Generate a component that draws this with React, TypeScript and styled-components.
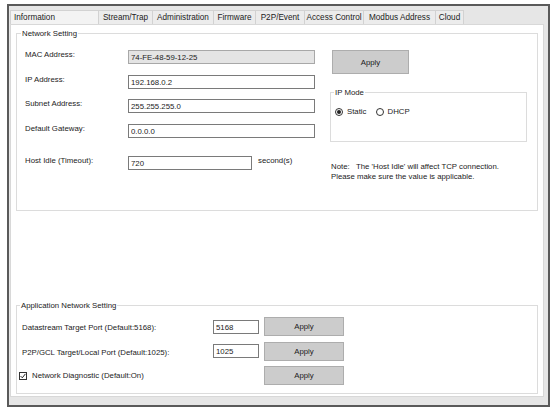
import { Fragment } from 'react';
import styled, { createGlobalStyle } from 'styled-components';

const GlobalStyle = createGlobalStyle`
  body {
    margin: 0;
    background: #ffffff;
    font-family: 'Liberation Sans', Arial, sans-serif;
    font-size: 7.8px;
    color: #1b1b1b;
  }
`;

const Window = styled.div`
  box-sizing: border-box;
  width: 543px;
  height: 403px;
  margin: 4px 0 0 7px;
  border: 2px solid #5a5a5a;
  background: #e6e6e6;
  display: flex;
  flex-direction: column;
  padding: 4px 4px 8px 1px;
`;

const TabStrip = styled.div`
  display: flex;
  height: 14px;
  padding-left: 1px;
`;

const Tab = styled.div<{ $w: number; $active?: boolean }>`
  box-sizing: border-box;
  width: ${(p) => p.$w}px;
  height: 14px;
  margin-left: -1px;
  border: 1px solid #d2d2d2;
  border-bottom: none;
  background: ${(p) => (p.$active ? '#f3f3f3' : '#ececec')};
  font-size: 8.2px;
  line-height: 13px;
  text-align: ${(p) => (p.$active ? 'left' : 'center')};
  padding-left: ${(p) => (p.$active ? '3px' : '0')};
  white-space: nowrap;
`;

const Panel = styled.div`
  flex: 1;
  background: #ffffff;
  border: 1px solid #d8d8d8;
  display: flex;
  flex-direction: column;
  justify-content: space-between;
  padding: 4px 5px 2px 5px;
`;

const Group = styled.fieldset<{ $h?: number; $w?: number }>`
  box-sizing: border-box;
  margin: 0;
  padding: 0;
  border: 1px solid #dcdcdc;
  min-width: 0;
  ${(p) => (p.$h ? `height: ${p.$h}px;` : '')}
  ${(p) => (p.$w ? `width: ${p.$w}px;` : '')}
`;

const Legend = styled.legend<{ $x: number }>`
  font-size: 7.8px;
  line-height: 9px;
  padding: 0 1px;
  margin-left: ${(p) => p.$x}px;
`;

const NetworkBody = styled.div`
  display: flex;
  padding: 12px 0 0 8px;
`;

const LeftCol = styled.div`
  width: 305px;
  display: flex;
  flex-direction: column;
  gap: 10.67px;
`;

const Row = styled.div<{ $top?: number }>`
  display: flex;
  align-items: flex-start;
  height: 14px;
  margin-top: ${(p) => p.$top ?? 0}px;
`;

const Label = styled.span`
  width: 103px;
  line-height: 9px;
  white-space: nowrap;
`;

const TextBox = styled.input<{ $w: number; $disabled?: boolean }>`
  box-sizing: border-box;
  width: ${(p) => p.$w}px;
  height: 14px;
  margin: 0;
  padding: 1px 2px 0;
  border: 1px solid ${(p) => (p.$disabled ? '#a8a8a8' : '#7a7a7a')};
  background: ${(p) => (p.$disabled ? '#e4e4e4' : '#ffffff')};
  font-family: 'Liberation Sans', Arial, sans-serif;
  font-size: 7.8px;
  color: #1b1b1b;
  outline: none;
`;

const Unit = styled.span`
  margin-left: 6px;
  line-height: 9px;
`;

const RightCol = styled.div`
  display: flex;
  flex-direction: column;
  align-items: flex-start;
`;

const Button = styled.button<{ $w: number; $h: number }>`
  box-sizing: border-box;
  width: ${(p) => p.$w}px;
  height: ${(p) => p.$h}px;
  margin: 0;
  padding: 0;
  border: 1px solid #adadad;
  background: #cccccc;
  font-family: 'Liberation Sans', Arial, sans-serif;
  font-size: 7.8px;
  color: #1b1b1b;
`;

const ApplyTop = styled(Button)`
  margin-left: 2px;
`;

const ModeGroup = styled(Group)`
  margin-top: 14px;
`;

const RadioRow = styled.div`
  display: flex;
  align-items: center;
  padding: 10px 0 0 4px;
  line-height: 9px;
`;

const RadioOption = styled.label`
  display: flex;
  align-items: center;
  gap: 4px;
  margin-right: 9px;
`;

const RadioDot = styled.span<{ $on?: boolean }>`
  box-sizing: border-box;
  width: 8px;
  height: 8px;
  border: 1px solid #333333;
  border-radius: 50%;
  display: flex;
  align-items: center;
  justify-content: center;

  &::after {
    content: '';
    width: 4px;
    height: 4px;
    border-radius: 50%;
    background: ${(p) => (p.$on ? '#222222' : 'transparent')};
  }
`;

const Note = styled.p`
  margin: 20px 0 0 1px;
  line-height: 10px;
  white-space: pre;
`;

const AppBody = styled.div`
  display: grid;
  grid-template-columns: 186px 46px 80px;
  grid-auto-rows: 19px;
  column-gap: 5px;
  row-gap: 5.5px;
  align-items: center;
  padding: 7px 0 8px 5px;
`;

const RowLabel = styled.span`
  white-space: nowrap;
  padding-top: 2px;
`;

const CheckLabel = styled.label`
  grid-column: 1 / 3;
  display: flex;
  align-items: center;
  gap: 5px;
  margin-left: -3px;
`;

const CheckBox = styled.span`
  box-sizing: border-box;
  width: 8px;
  height: 8px;
  border: 1px solid #333333;
  display: flex;
  align-items: center;
  justify-content: center;
`;

const tabs = [
  { name: 'Information', w: 89, active: true },
  { name: 'Stream/Trap', w: 55 },
  { name: 'Administration', w: 62 },
  { name: 'Firmware', w: 43 },
  { name: 'P2P/Event', w: 50 },
  { name: 'Access Control', w: 60 },
  { name: 'Modbus Address', w: 73 },
  { name: 'Cloud', w: 29 },
];

const fields = [
  { label: 'MAC Address:', value: '74-FE-48-59-12-25', disabled: true },
  { label: 'IP Address:', value: '192.168.0.2' },
  { label: 'Subnet Address:', value: '255.255.255.0' },
  { label: 'Default Gateway:', value: '0.0.0.0' },
];

const ports = [
  { label: 'Datastream Target Port (Default:5168):', value: '5168' },
  { label: 'P2P/GCL Target/Local Port (Default:1025):', value: '1025' },
];

export default function App() {
  return (
    <>
      <GlobalStyle />
      <Window>
        <TabStrip>
          {tabs.map((t) => (
            <Tab key={t.name} $w={t.w} $active={t.active}>
              {t.name}
            </Tab>
          ))}
        </TabStrip>
        <Panel>
          <Group $h={182}>
            <Legend $x={4}>Network Setting</Legend>
            <NetworkBody>
              <LeftCol>
                {fields.map((f) => (
                  <Row key={f.label}>
                    <Label>{f.label}</Label>
                    <TextBox $w={187} $disabled={f.disabled} readOnly value={f.value} />
                  </Row>
                ))}
                <Row $top={7.3}>
                  <Label>Host Idle (Timeout):</Label>
                  <TextBox $w={124} readOnly value="720" />
                  <Unit>second(s)</Unit>
                </Row>
              </LeftCol>
              <RightCol>
                <ApplyTop $w={77} $h={24}>Apply</ApplyTop>
                <ModeGroup $w={197} $h={54}>
                  <Legend $x={3}>IP Mode</Legend>
                  <RadioRow>
                    <RadioOption>
                      <RadioDot $on />
                      Static
                    </RadioOption>
                    <RadioOption>
                      <RadioDot />
                      DHCP
                    </RadioOption>
                  </RadioRow>
                </ModeGroup>
                <Note>
                  {"Note:   The 'Host Idle' will affect TCP connection.\nPlease make sure the value is applicable."}
                </Note>
              </RightCol>
            </NetworkBody>
          </Group>

          <Group>
            <Legend $x={3}>Application Network Setting</Legend>
            <AppBody>
              {ports.map((p) => (
                <Fragment key={p.label}>
                  <RowLabel>{p.label}</RowLabel>
                  <TextBox $w={46} readOnly value={p.value} />
                  <Button $w={80} $h={19}>Apply</Button>
                </Fragment>
              ))}
              <CheckLabel>
                <CheckBox>
                  <svg width="6" height="6" viewBox="0 0 6 6">
                    <path d="M0.6 3.1 L2.3 4.8 L5.4 0.9" fill="none" stroke="#222" strokeWidth="1" />
                  </svg>
                </CheckBox>
                Network Diagnostic (Default:On)
              </CheckLabel>
              <Button $w={80} $h={19}>Apply</Button>
            </AppBody>
          </Group>
        </Panel>
      </Window>
    </>
  );
}
